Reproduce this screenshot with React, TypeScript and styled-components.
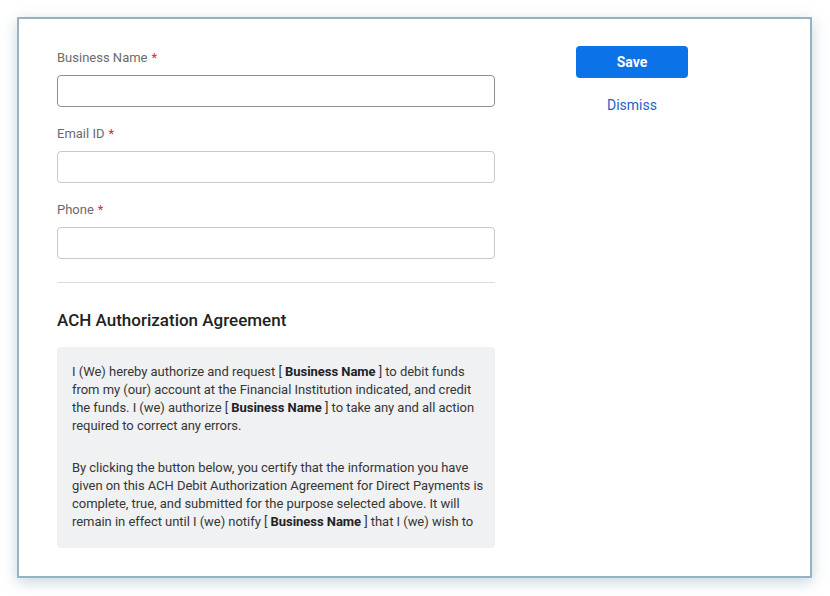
import React from "react";
import styled, { createGlobalStyle } from "styled-components";

const Global = createGlobalStyle`
  html, body { margin: 0; padding: 0; background: #ffffff; }
  body { font-family: Roboto, "Liberation Sans", Arial, sans-serif; }
  * { box-sizing: border-box; }
`;

const Page = styled.div`
  width: 830px;
  height: 596px;
  padding: 17px 18px 18px 17px;
`;

const Frame = styled.div`
  width: 795px;
  height: 561px;
  border: 2px solid #97b3c3;
  background: #fff;
  box-shadow: 0 4px 14px rgba(120, 150, 170, 0.4);
  display: grid;
  grid-template-columns: 438px 192px;
  column-gap: 81px;
  padding: 31px 0 0 38px;
  overflow: hidden;
`;

const FormCol = styled.div`
  display: flex;
  flex-direction: column;
`;

const Field = styled.div`
  display: flex;
  flex-direction: column;
  gap: 9px;
  margin-bottom: 19px;
`;

const Label = styled.label`
  font-size: 13px;
  line-height: 16px;
  color: #6b6b6b;
`;

const Req = styled.span`
  color: #e0253a;
  margin-left: 4px;
`;

const Input = styled.input<{ $strong?: boolean }>`
  width: 438px;
  height: 32px;
  border: 1px solid ${(p) => (p.$strong ? "#8f8f8f" : "#c9c9c9")};
  border-radius: 4px;
  background: #fff;
  outline: none;
  padding: 0 10px;
`;

const Divider = styled.hr`
  border: none;
  border-top: 1px solid #dcdcdc;
  margin: 4px 0 0 0;
  width: 438px;
`;

const Heading = styled.h2`
  margin: 26px 0 0 0;
  font-size: 17px;
  line-height: 22px;
  font-weight: 500;
  color: #222;
`;

const AgreementBox = styled.div`
  margin-top: 16px;
  width: 438px;
  height: 201px;
  background: #f0f1f3;
  border-radius: 4px;
  padding: 16px 3px 17px 15px;
`;

const Scroll = styled.div`
  height: 168px;
  overflow: hidden;
`;

const Para = styled.p`
  margin: 0 0 24px 0;
  font-size: 13px;
  line-height: 18px;
  letter-spacing: -0.04px;
  color: #363636;
  white-space: nowrap;
  &:last-child { margin-bottom: 0; }
  b { font-weight: 700; color: #222; }
`;

const ActionCol = styled.div`
  display: flex;
  flex-direction: column;
  align-items: flex-start;
  margin-top: -4px;
`;

const ActionStack = styled.div`
  width: 112px;
  display: flex;
  flex-direction: column;
  align-items: center;
  gap: 18px;
`;

const SaveButton = styled.button`
  width: 112px;
  height: 32px;
  background: #0b72e7;
  color: #fff;
  border: none;
  border-radius: 4px;
  font-family: inherit;
  font-size: 14px;
  font-weight: 700;
`;

const DismissLink = styled.a`
  font-size: 14px;
  color: #1b63c6;
  text-decoration: none;
  line-height: 18px;
`;

export default function App() {
  return (
    <Page>
      <Global />
      <Frame>
        <FormCol>
          <Field>
            <Label>
              Business Name<Req>*</Req>
            </Label>
            <Input $strong />
          </Field>
          <Field>
            <Label>
              Email ID<Req>*</Req>
            </Label>
            <Input />
          </Field>
          <Field>
            <Label>
              Phone<Req>*</Req>
            </Label>
            <Input />
          </Field>
          <Divider />
          <Heading>ACH Authorization Agreement</Heading>
          <AgreementBox>
            <Scroll>
              <Para>
                I (We) hereby authorize and request [ <b>Business Name</b> ] to debit funds
                <br />
                from my (our) account at the Financial Institution indicated, and credit
                <br />
                the funds. I (we) authorize [ <b>Business Name</b> ] to take any and all action
                <br />
                required to correct any errors.
              </Para>
              <Para>
                By clicking the button below, you certify that the information you have
                <br />
                given on this ACH Debit Authorization Agreement for Direct Payments is
                <br />
                complete, true, and submitted for the purpose selected above. It will
                <br />
                remain in effect until I (we) notify [ <b>Business Name</b> ] that I (we) wish to
              </Para>
            </Scroll>
          </AgreementBox>
        </FormCol>
        <ActionCol>
          <ActionStack>
            <SaveButton>Save</SaveButton>
            <DismissLink href="#">Dismiss</DismissLink>
          </ActionStack>
        </ActionCol>
      </Frame>
    </Page>
  );
}
